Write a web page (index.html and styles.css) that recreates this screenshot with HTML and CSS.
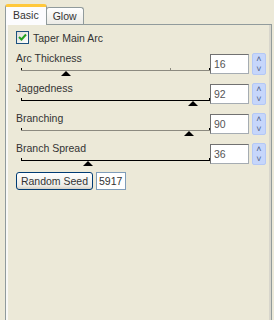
FILE: index.html
```html
<!DOCTYPE html>
<html>
<head>
<link rel="stylesheet" href="styles.css">
</head>
<body>
<div class="window">
  <div class="tabs">
    <div class="tab active">Basic</div>
    <div class="tab">Glow</div>
  </div>
  <div class="panel">
    <label class="check">
      <span class="box">
        <svg width="9" height="9" viewBox="0 0 9 9"><path d="M1 4 L3.5 6.5 L8 1.5" fill="none" stroke="#21a121" stroke-width="2"/></svg>
      </span>
      Taper Main Arc
    </label>

    <div class="row">
      <div class="slider">
        <div class="label">Arc Thickness</div>
        <div class="track gray"><span class="tick" style="left: 149px"></span><span class="thumb" style="left: 45px"></span></div>
      </div>
      <div class="num"><div class="field">16</div><div class="spin"><span>&#708;</span><span>&#709;</span></div></div>
    </div>

    <div class="row">
      <div class="slider">
        <div class="label">Jaggedness</div>
        <div class="track"><span class="thumb" style="left: 172px"></span></div>
      </div>
      <div class="num"><div class="field">92</div><div class="spin"><span>&#708;</span><span>&#709;</span></div></div>
    </div>

    <div class="row">
      <div class="slider">
        <div class="label">Branching</div>
        <div class="track gray"><span class="thumb" style="left: 168px"></span></div>
      </div>
      <div class="num"><div class="field">90</div><div class="spin"><span>&#708;</span><span>&#709;</span></div></div>
    </div>

    <div class="row">
      <div class="slider">
        <div class="label">Branch Spread</div>
        <div class="track"><span class="thumb" style="left: 67px"></span></div>
      </div>
      <div class="num"><div class="field">36</div><div class="spin"><span>&#708;</span><span>&#709;</span></div></div>
    </div>

    <div class="seed">
      <button class="button">Random Seed</button>
      <div class="seedbox">5917</div>
    </div>
  </div>
</div>
</body>
</html>
```
FILE: styles.css
```css
body {
  margin: 0;
  background-color: #ece9d8;
  font-family: 'Liberation Sans', Arial, sans-serif;
  font-size: 10.5px;
  color: #333;
}

.window {
  padding: 4px 2px 0 5px;
  height: 316px;
  display: flex;
  flex-direction: column;
}

.tabs {
  display: flex;
  align-items: flex-end;
  height: 20px;
  position: relative;
  z-index: 1;
}

.tab {
  height: 16px;
  line-height: 16px;
  padding: 0 6px;
  border: 1px solid #919b9c;
  border-bottom: none;
  border-radius: 3px 3px 0 0;
  background: linear-gradient(#ffffff, #ecebe6);
  margin-left: -1px;
}

.tab.active {
  padding: 0 7px;
  margin-left: 0;
  border-top: 3px solid #ffc83c;
  height: 18px;
  line-height: 17px;
  background: #fcfcfe;
  margin-bottom: -1px;
  position: relative;
  z-index: 2;
}

.panel {
  flex: 1;
  border: 1px solid #919b9c;
  border-bottom: none;
  box-shadow: inset 2px 0 0 #f8f8f6, inset -2px 0 0 #d8d6cc;
  padding: 6px 9px 0 10px;
}

.check {
  display: flex;
  align-items: center;
  gap: 4px;
  height: 13px;
}

.box {
  width: 11px;
  height: 11px;
  border: 1px solid #1c5180;
  background: linear-gradient(135deg, #dcdcd7, #ffffff);
  display: flex;
  align-items: center;
  justify-content: center;
}

.row {
  display: flex;
  align-items: flex-start;
  height: 30px;
}

.check + .row {
  margin-top: 7px;
}

.slider {
  width: 201px;
}

.label {
  height: 14px;
  line-height: 14px;
}

.track {
  position: relative;
  margin: 5px 0 0 5px;
  width: 189px;
  height: 1px;
  background: #000;
}

.track.gray {
  background: #8c8a80;
}

.track::before,
.track::after {
  content: "";
  position: absolute;
  width: 1px;
  height: 2px;
  background: #000;
}

.track::before {
  left: 0;
  top: -2px;
}

.track::after {
  right: 0;
  top: -2px;
}

.tick {
  position: absolute;
  top: -2px;
  width: 1px;
  height: 2px;
  background: #8c8a80;
}

.thumb {
  position: absolute;
  top: 1px;
  width: 0;
  height: 0;
  margin-left: -5px;
  border-left: 5px solid transparent;
  border-right: 5px solid transparent;
  border-bottom: 5px solid #000;
}

.num {
  display: flex;
  align-items: flex-start;
  margin-top: 3px;
}

.field {
  width: 34px;
  height: 18px;
  line-height: 18px;
  padding-left: 3px;
  background: #fff;
  border: 1px solid #a5acb2;
  border-left-color: #717171;
  border-top-color: #717171;
  color: #555;
}

.spin {
  width: 12px;
  height: 20px;
  margin: -1px 0 0 3px;
  background: #c6d6fb;
  border: 1px solid #b4c8f6;
  border-radius: 2px;
  display: flex;
  flex-direction: column;
  align-items: center;
  color: #4d6185;
  font-size: 9px;
  line-height: 10px;
}

.seed {
  display: flex;
  align-items: center;
  gap: 3px;
  margin-top: 1px;
}

.button {
  font-family: inherit;
  font-size: 10.5px;
  color: #333;
  width: 77px;
  height: 18px;
  padding: 0;
  border: 1px solid #003c74;
  border-radius: 3px;
  background: linear-gradient(#ffffff, #ecebe6 80%, #d6d0c5);
}

.seedbox {
  width: 26px;
  height: 16px;
  line-height: 16px;
  padding-left: 2px;
  background: #fff;
  border: 1px solid #7f9db9;
}
```
